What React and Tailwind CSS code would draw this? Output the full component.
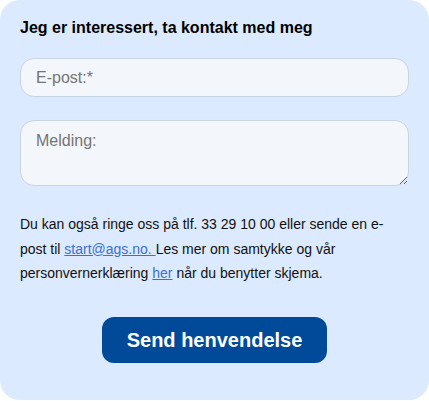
import React from 'react'

const App = () => {
    return (
        <div className="min-h-screen bg-white" style={{ fontFamily: '"Liberation Sans", Arial, sans-serif' }}>
            <form className="bg-[#dbeafe] rounded-[20px] h-[400px] px-5 pt-[17px]">
                <h2 className="text-[16px] leading-[22px] font-bold text-black">
                    Jeg er interessert, ta kontakt med meg
                </h2>

                <input
                    type="email"
                    placeholder="E-post:*"
                    className="mt-[19px] block w-full h-[39px] rounded-[14px] bg-[#f3f6fa] border border-[#c7d4e4] px-[15px] text-[16px] placeholder:text-[#757575] outline-none"
                />

                <textarea
                    placeholder="Melding:"
                    className="mt-[23px] block w-full h-[66px] rounded-[14px] bg-[#f3f6fa] border border-[#c7d4e4] px-[15px] py-[10px] text-[16px] leading-[19px] placeholder:text-[#757575] outline-none"
                />

                <p className="mt-[26px] text-[14px] leading-[24.5px] text-[#111]">
                    Du kan også ringe oss på tlf. 33 29 10 00 eller sende en e-post til{' '}
                    <a href="mailto:start@ags.no" className="text-[#3b6fd8] underline">start@ags.no. </a>
                    Les mer om samtykke og vår personvernerklæring{' '}
                    <a href="#" className="text-[#3b6fd8] underline">her</a> når du benytter skjema.
                </p>

                <div className="flex justify-center mt-[31px]">
                    <button
                        type="button"
                        className="w-[225px] h-[46px] rounded-[12px] bg-[#004a99] text-white text-[20px] font-bold"
                    >
                        Send henvendelse
                    </button>
                </div>
            </form>
        </div>
    )
}

export default App
